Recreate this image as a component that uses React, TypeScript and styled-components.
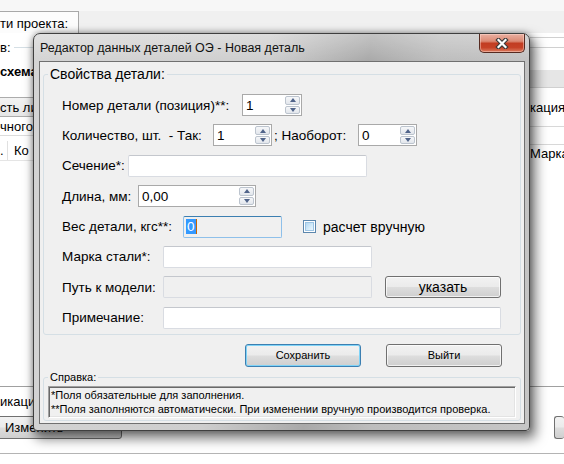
import React from 'react';
import styled, { createGlobalStyle } from 'styled-components';

const GlobalStyle = createGlobalStyle`
  html, body {
    margin: 0;
    padding: 0;
  }
  body {
    background: #fff;
    font-family: 'Liberation Sans', Arial, sans-serif;
    font-size: 13px;
    color: #000;
  }
  * {
    box-sizing: border-box;
  }
`;

const Screen = styled.div`
  position: relative;
  width: 564px;
  height: 464px;
  overflow: hidden;
  background: #fff;
`;

/* ---------- main window behind the dialog ---------- */

const Backdrop = styled.div`
  display: flex;
  flex-direction: column;
  height: 100%;
`;

const TopStrip = styled.div`
  height: 11px;
  flex-shrink: 0;
  background: #f7f7f7;
`;

const TabStrip = styled.div`
  height: 22px;
  flex-shrink: 0;
  display: flex;
  background: #f0f0f0;
`;

const Tab = styled.div`
  width: 79px;
  padding-top: 1px;
  display: flex;
  align-items: center;
  white-space: nowrap;
  background: #fcfcfc;
  border-top: 1px solid #a8a8a8;
  border-right: 1px solid #a8a8a8;
`;

const Middle = styled.div`
  height: 353px;
  flex-shrink: 0;
  display: flex;
  justify-content: space-between;
`;

const Pane = styled.div<{ $w: number }>`
  width: ${p => p.$w}px;
  display: flex;
  flex-direction: column;
  white-space: nowrap;
`;

const CaptionLine = styled.div`
  margin-top: 7px;
  height: 14px;
  display: flex;
  align-items: center;
  gap: 3px;

  &::after {
    content: '';
    flex: 1;
    border-top: 1px solid #d5dfe5;
  }
`;

const BoldText = styled.div`
  margin-top: 11px;
  height: 14px;
  line-height: 14px;
  font-weight: bold;
`;

const PaneButton = styled.div`
  margin-top: 18px;
  height: 20px;
  display: flex;
  align-items: center;
  border-top: 1px solid #acacac;
  border-bottom: 1px solid #acacac;
  background: linear-gradient(180deg, #f3f3f3 0%, #e6e6e6 100%);
`;

const PaneRow = styled.div`
  height: 19px;
  display: flex;
  align-items: center;
  border-bottom: 1px solid #dcdcdc;
`;

const ListHeader = styled.div`
  margin-top: 5px;
  height: 20px;
  display: flex;
  align-items: center;
  border-bottom: 1px solid #e5e5e5;
`;

const HeaderCell = styled.div<{ $w?: number }>`
  width: ${p => (p.$w ? `${p.$w}px` : 'auto')};
  height: 100%;
  display: flex;
  align-items: center;
  padding-left: ${p => (p.$w ? 0 : 6)}px;
  border-right: ${p => (p.$w ? '1px solid #e0e0e0' : 'none')};
`;

const RuleBox = styled.div`
  margin-top: 4px;
  height: 11px;
  border-top: 1px solid #d0d0d0;
  border-bottom: 1px solid #d0d0d0;
`;

const Band = styled.div`
  margin-top: 22px;
  height: 18px;
  background: #e6e6e6;
  border-bottom: 1px solid #d0d0d0;
`;

const PaneText = styled.div<{ $mt: number }>`
  margin-top: ${p => p.$mt}px;
  height: 16px;
  line-height: 16px;
  overflow: hidden;
`;

const Rule = styled.div<{ $mt: number }>`
  margin-top: ${p => p.$mt}px;
  border-top: 1px solid #d8d8d8;
`;

const BottomArea = styled.div`
  flex: 1;
  display: flex;
  flex-direction: column;
  border-top: 1px solid #a0a0a0;
`;

const InfoRow = styled.div`
  height: 29px;
  display: flex;
  align-items: center;
`;

const ToolRow = styled.div`
  height: 38px;
  display: flex;
  justify-content: space-between;
  align-items: flex-start;
  border-bottom: 1px solid #b4b4b4;
`;

const ToolButton = styled.div<{ $w: number; $ml?: number }>`
  width: ${p => p.$w}px;
  height: 23px;
  margin-left: ${p => p.$ml ?? 0}px;
  padding-left: ${p => (p.$w > 20 ? 8 : 0)}px;
  display: flex;
  align-items: center;
  white-space: nowrap;
  overflow: hidden;
  border: 1px solid #707070;
  border-right: ${p => (p.$w > 20 ? '1px solid #707070' : 'none')};
  border-radius: 3px;
  background: linear-gradient(180deg, #f2f2f2 0%, #ebebeb 48%, #dddddd 52%, #cfcfcf 100%);
`;

/* ---------- dialog ---------- */

const Dialog = styled.div`
  position: absolute;
  left: 33px;
  top: 33px;
  width: 497px;
  height: 398px;
  display: flex;
  flex-direction: column;
  padding: 0 4px 6px 5px;
  border: 1px solid #3f3f3f;
  border-radius: 7px 7px 4px 4px;
  background:
    linear-gradient(180deg, rgba(255, 255, 255, 0.3) 0px, rgba(255, 255, 255, 0) 27px),
    linear-gradient(100deg, #d4d4d4 0%, #cecece 42%, #a9a9a9 60%, #bdbdbd 72%, #c6c6c6 100%);
  box-shadow: 4px 6px 12px 2px rgba(0, 0, 0, 0.5), 0 0 6px rgba(0, 0, 0, 0.35);
`;

const TitleBar = styled.div`
  height: 27px;
  flex-shrink: 0;
  display: flex;
  align-items: flex-start;
`;

const Title = styled.div`
  flex: 1;
  align-self: center;
  padding-left: 1px;
  font-size: 12.5px;
  color: #111;
  white-space: nowrap;
`;

const CloseButton = styled.div`
  width: 46px;
  height: 19px;
  display: flex;
  align-items: center;
  justify-content: center;
  border: 1px solid #562a20;
  border-top: none;
  border-radius: 0 0 5px 5px;
  background: linear-gradient(180deg, #eab0a2 0%, #dc8a74 40%, #c23d22 52%, #c64227 75%, #dc7d60 100%);
  box-shadow: inset 0 0 0 1px rgba(255, 225, 215, 0.45);
`;

const Client = styled.div`
  flex: 1;
  display: flex;
  flex-direction: column;
  padding: 0 3px;
  border: 1px solid #707070;
  background: #f0f0f0;
  font-size: 13.5px;
`;

const Group = styled.fieldset<{ $mt: number }>`
  margin: ${p => p.$mt}px 0 0 0;
  padding: 0 4px;
  min-width: 0;
  border: 1px solid #d5dfe5;
  border-radius: 3px;
`;

const GroupTitle = styled.legend<{ $size: number }>`
  padding: 0 2px;
  font-size: ${p => p.$size}px;
  line-height: ${p => Math.round(p.$size) + 2}px;
`;

const FieldList = styled.div`
  display: flex;
  flex-direction: column;
  gap: 8.4px;
  padding: 12px 0 5px 14px;
`;

const FieldRow = styled.div`
  height: 22px;
  display: flex;
  align-items: center;
`;

const FieldLabel = styled.span<{ $w: number }>`
  width: ${p => p.$w}px;
  flex-shrink: 0;
  white-space: pre;
`;

const SpinBox = styled.div<{ $w: number }>`
  width: ${p => p.$w}px;
  height: 22px;
  flex-shrink: 0;
  display: flex;
  border: 1px solid #a9a9a9;
  background: #fff;
`;

const SpinValue = styled.span`
  flex: 1;
  display: flex;
  align-items: center;
  padding-left: 3px;
`;

const SpinButtons = styled.div`
  width: 16px;
  display: flex;
  flex-direction: column;
  gap: 1px;
  padding: 1px 1px 1px 0;
`;

const SpinArrow = styled.div<{ $down?: boolean }>`
  flex: 1;
  display: flex;
  align-items: center;
  justify-content: center;
  border: 1px solid #bcc4ce;
  border-radius: 2px;
  background: linear-gradient(180deg, #f6f7f9 0%, #e2e6ec 100%);

  &::after {
    content: '';
    border-left: 3.5px solid transparent;
    border-right: 3.5px solid transparent;
    ${p => (p.$down ? 'border-top' : 'border-bottom')}: 4px solid #50648a;
  }
`;

type BoxKind = 'normal' | 'disabled' | 'focused';

const TextBox = styled.div<{ $w: number; $kind?: BoxKind }>`
  width: ${p => p.$w}px;
  height: 22px;
  flex-shrink: 0;
  display: flex;
  align-items: center;
  padding-left: 2px;
  border: 1px solid ${p => (p.$kind === 'focused' ? '#8ec0ea' : '#d9dce2')};
  border-top-color: ${p => (p.$kind === 'focused' ? '#3c7fb1' : '#c4c7cd')};
  border-radius: 2px;
  background: ${p => (p.$kind === 'normal' || !p.$kind ? '#fff' : '#f0f0f0')};
`;

const Selection = styled.span`
  padding: 0 1px;
  line-height: 15px;
  background: #3399ff;
  color: #fff;
`;

const Caret = styled.span`
  width: 1px;
  height: 15px;
  background: #c86400;
`;

const Joiner = styled.span<{ $w: number; $ml: number }>`
  width: ${p => p.$w}px;
  margin-left: ${p => p.$ml}px;
  flex-shrink: 0;
  white-space: nowrap;
`;

const CheckBox = styled.span`
  width: 13px;
  height: 13px;
  margin-left: 21px;
  flex-shrink: 0;
  display: flex;
  padding: 1px;
  border: 1px solid #5c87ad;
  background: #fff;

  &::before {
    content: '';
    flex: 1;
    border: 1px solid #9cc4e4;
    background: linear-gradient(135deg, #b4d7f1 0%, #d6ecfa 60%, #eaf6fd 100%);
  }
`;

const CheckText = styled.span`
  margin-left: 7px;
  white-space: nowrap;
  font-size: 14px;
`;

const PushButton = styled.button<{ $w: number; $h: number; $ml?: number; $size?: number; $focused?: boolean }>`
  width: ${p => p.$w}px;
  height: ${p => p.$h}px;
  margin: 0 0 0 ${p => p.$ml ?? 0}px;
  padding: 0;
  flex-shrink: 0;
  font-family: inherit;
  font-size: ${p => p.$size ?? 11}px;
  color: #000;
  border: 1px solid ${p => (p.$focused ? '#3c7fb1' : '#707070')};
  border-radius: 3px;
  background: linear-gradient(180deg, #f2f2f2 0%, #ebebeb 48%, #dddddd 52%, #cfcfcf 100%);
  box-shadow: inset 0 0 0 1px ${p => (p.$focused ? '#7fd3f7' : 'rgba(255, 255, 255, 0.7)')};
`;

const ButtonBar = styled.div`
  margin-top: 9px;
  display: flex;
  justify-content: flex-end;
  gap: 25px;
  padding-right: 19px;
`;

const HelpBox = styled.div`
  height: 32px;
  margin: 1.5px 0 2px;
  padding: 1px 0 0 2px;
  font-size: 11px;
  line-height: 14px;
  white-space: nowrap;
  border: 1px solid;
  border-color: #a0a0a0 #fff #fff #a0a0a0;
  box-shadow: inset 1px 1px 0 #696969, inset -1px -1px 0 #e3e3e3;
`;

const Spin: React.FC<{ w: number; value: string }> = ({ w, value }) => (
  <SpinBox $w={w}>
    <SpinValue>{value}</SpinValue>
    <SpinButtons>
      <SpinArrow />
      <SpinArrow $down />
    </SpinButtons>
  </SpinBox>
);

const App: React.FC = () => {
  return (
    <Screen>
      <GlobalStyle />
      <Backdrop>
        <TopStrip />
        <TabStrip>
          <Tab>ти проекта:</Tab>
        </TabStrip>
        <Middle>
          <Pane $w={36}>
            <CaptionLine>в:</CaptionLine>
            <BoldText>схема</BoldText>
            <PaneButton>сть ли</PaneButton>
            <PaneRow>чного</PaneRow>
            <ListHeader>
              <HeaderCell $w={8}>.</HeaderCell>
              <HeaderCell>Ко</HeaderCell>
            </ListHeader>
          </Pane>
          <Pane $w={34}>
            <RuleBox />
            <Band />
            <PaneText $mt={12}>кация</PaneText>
            <Rule $mt={10} />
            <Rule $mt={17} />
            <PaneText $mt={1}>Марка</PaneText>
          </Pane>
        </Middle>
        <BottomArea>
          <InfoRow>икаци</InfoRow>
          <ToolRow>
            <ToolButton $w={126} $ml={-4}>Изменить</ToolButton>
            <ToolButton $w={10} />
          </ToolRow>
        </BottomArea>
      </Backdrop>

      <Dialog>
        <TitleBar>
          <Title>Редактор данных деталей ОЭ - Новая деталь</Title>
          <CloseButton>
            <svg width="14" height="11" viewBox="0 0 14 11">
              <path d="M3.5 2 L10.5 9 M10.5 2 L3.5 9" stroke="#3a3a3a" strokeWidth="4.4" strokeLinecap="square" />
              <path d="M3.5 2 L10.5 9 M10.5 2 L3.5 9" stroke="#fff" strokeWidth="2.2" strokeLinecap="square" />
            </svg>
          </CloseButton>
        </TitleBar>

        <Client>
          <Group $mt={4}>
            <GroupTitle $size={14}>Свойства детали:</GroupTitle>
            <FieldList>
              <FieldRow>
                <FieldLabel $w={180}>Номер детали (позиция)**:</FieldLabel>
                <Spin w={60} value="1" />
              </FieldRow>
              <FieldRow>
                <FieldLabel $w={151}>Количество, шт.  - Так:</FieldLabel>
                <Spin w={59} value="1" />
                <Joiner $w={84} $ml={2}>; Наоборот:</Joiner>
                <Spin w={59} value="0" />
              </FieldRow>
              <FieldRow>
                <FieldLabel $w={66}>Сечение*:</FieldLabel>
                <TextBox $w={239} />
              </FieldRow>
              <FieldRow>
                <FieldLabel $w={76}>Длина, мм:</FieldLabel>
                <Spin w={118} value="0,00" />
              </FieldRow>
              <FieldRow>
                <FieldLabel $w={121}>Вес детали, кгс**:</FieldLabel>
                <TextBox $w={99} $kind="focused">
                  <Selection>0</Selection>
                  <Caret />
                </TextBox>
                <CheckBox />
                <CheckText>расчет вручную</CheckText>
              </FieldRow>
              <FieldRow>
                <FieldLabel $w={101}>Марка стали*:</FieldLabel>
                <TextBox $w={209} />
              </FieldRow>
              <FieldRow>
                <FieldLabel $w={101}>Путь к модели:</FieldLabel>
                <TextBox $w={209} $kind="disabled" />
                <PushButton $w={116} $h={22} $ml={13} $size={14}>указать</PushButton>
              </FieldRow>
              <FieldRow>
                <FieldLabel $w={101}>Примечание:</FieldLabel>
                <TextBox $w={338} />
              </FieldRow>
            </FieldList>
          </Group>

          <ButtonBar>
            <PushButton $w={116} $h={23} $focused>Сохранить</PushButton>
            <PushButton $w={116} $h={23}>Выйти</PushButton>
          </ButtonBar>

          <Group $mt={4.5}>
            <GroupTitle $size={11}>Справка:</GroupTitle>
            <HelpBox>
              *Поля обязательные для заполнения.
              <br />
              **Поля заполняются автоматически. При изменении вручную производится проверка.
            </HelpBox>
          </Group>
        </Client>
      </Dialog>
    </Screen>
  );
};

export default App;
